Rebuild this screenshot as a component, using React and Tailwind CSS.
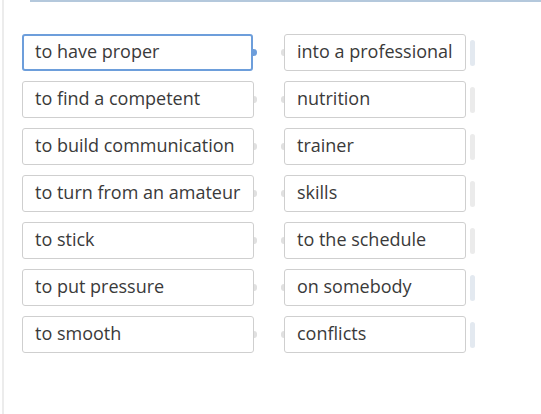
import React from "react";

const pairs = [
  ["to have proper", "into a professional"],
  ["to find a competent", "nutrition"],
  ["to build communication", "trainer"],
  ["to turn from an amateur", "skills"],
  ["to stick", "to the schedule"],
  ["to put pressure", "on somebody"],
  ["to smooth", "conflicts"],
];

const App = () => {
  return (
    <div
      className="w-[541px] h-[414px] bg-white overflow-hidden pl-[2px]"
      style={{ fontFamily: '"Open Sans", sans-serif' }}
    >
      <div className="h-full border-l-2 border-[#ececec]">
        <div className="ml-[26px] h-[2px] bg-[#b4c8dc]" />

        <div className="pt-[32px] pl-[18px] flex flex-col gap-[10px]">
          {pairs.map(([left, right], i) => (
            <div key={i} className="flex items-center">
              <div
                className={
                  i === 0
                    ? "w-[231px] h-[37px] border-2 border-[#6d9edb] rounded-[3px] pl-[11px] pb-[3px] flex items-center text-[18px] leading-none text-[#3a3a3a]"
                    : "w-[232px] h-[37px] border border-[#cfcfcf] rounded-[3px] pl-[12px] pb-[3px] flex items-center text-[18px] leading-none text-[#3a3a3a]"
                }
              >
                {left}
              </div>
              <span
                className={
                  i === 0
                    ? "w-[4px] h-[7px] rounded-r-full bg-[#6d9edb]"
                    : "w-[3px] h-[7px] rounded-r-full bg-[#e0e0e0]"
                }
              />
              <span className="ml-[24px] w-[3px] h-[7px] rounded-l-full bg-[#e0e0e0]" />
              <div className="w-[182px] h-[37px] border border-[#cfcfcf] rounded-[3px] pl-[12px] pb-[3px] flex items-center text-[18px] leading-none text-[#3a3a3a] whitespace-nowrap">
                {right}
              </div>
              <div
                className={
                  i === 0 || i >= 5
                    ? "ml-[4px] w-[5px] h-[26px] rounded-full bg-[#e3e9f0]"
                    : "ml-[4px] w-[5px] h-[26px] rounded-full bg-[#ebebeb]"
                }
              />
            </div>
          ))}
        </div>
      </div>
    </div>
  );
};

export default App;
